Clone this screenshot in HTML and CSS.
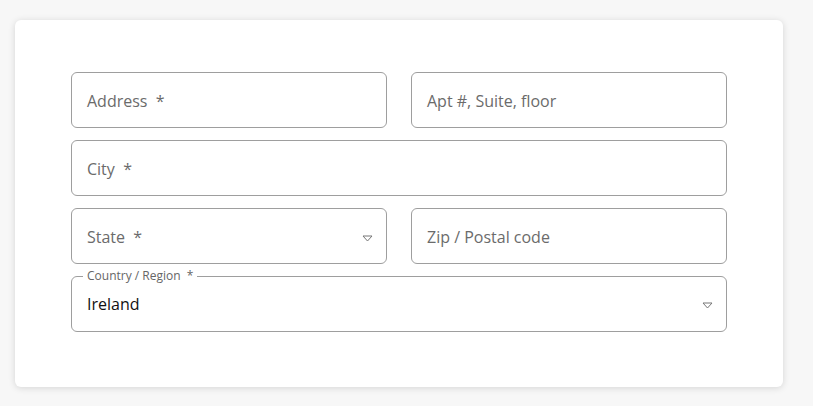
FILE: index.html
```html
<!DOCTYPE html>
<html>
<head>
<meta charset="utf-8">
<link rel="stylesheet" href="styles.css">
</head>
<body>
<div class="card">
  <div class="grid">
    <div class="field"><span class="ph">Address&nbsp; *</span></div>
    <div class="field"><span class="ph">Apt #, Suite, floor</span></div>
    <div class="field wide"><span class="ph">City&nbsp; *</span></div>
    <div class="field select"><span class="ph">State&nbsp; *</span>
      <svg class="caret" width="11" height="7" viewBox="0 0 11 7"><path d="M1 1 L10 1 L5.5 6 Z" fill="none" stroke="#777" stroke-width="1" stroke-linejoin="round"/></svg>
    </div>
    <div class="field"><span class="ph">Zip / Postal code</span></div>
    <div class="field wide select outlined">
      <span class="legend">Country / Region&nbsp; *</span>
      <span class="val">Ireland</span>
      <svg class="caret" width="11" height="7" viewBox="0 0 11 7"><path d="M1 1 L10 1 L5.5 6 Z" fill="none" stroke="#777" stroke-width="1" stroke-linejoin="round"/></svg>
    </div>
  </div>
</div>
</body>
</html>
```
FILE: styles.css
```css
html, body {
  margin: 0;
  padding: 0;
  background: #f7f7f7;
  font-family: "Open Sans", "Noto Sans", sans-serif;
}
body {
  padding: 20px 30px 19px 15px;
}
.card {
  width: 768px;
  box-sizing: border-box;
  background: #fff;
  border-radius: 6px;
  box-shadow: 0 1px 7px rgba(0,0,0,0.14);
  padding: 52px 56px 55px 56px;
}
.grid {
  display: grid;
  grid-template-columns: 316px 316px;
  column-gap: 24px;
  row-gap: 12px;
}
.field {
  box-sizing: border-box;
  height: 56px;
  border: 1px solid #9e9e9e;
  border-radius: 6px;
  display: flex;
  align-items: center;
  padding: 0 15px;
  margin: 0;
  min-width: 0;
}
.wide {
  grid-column: 1 / 3;
}
.select {
  justify-content: space-between;
  padding-right: 13px;
}
.ph {
  font-size: 16px;
  color: #6b6b6b;
  padding-top: 2px;
}
.caret {
  display: block;
  margin-top: 4px;
}
.outlined {
  position: relative;
  align-items: flex-start;
  padding-top: 16px;
}
.outlined .legend {
  position: absolute;
  left: 11px;
  top: -9px;
  background: #fff;
  padding: 0 4px;
  font-size: 12px;
  line-height: 16px;
  color: #666;
}
.outlined .val {
  font-size: 16px;
  color: #111;
  line-height: 22px;
}
.outlined .caret {
  margin-top: 9px;
}
```
